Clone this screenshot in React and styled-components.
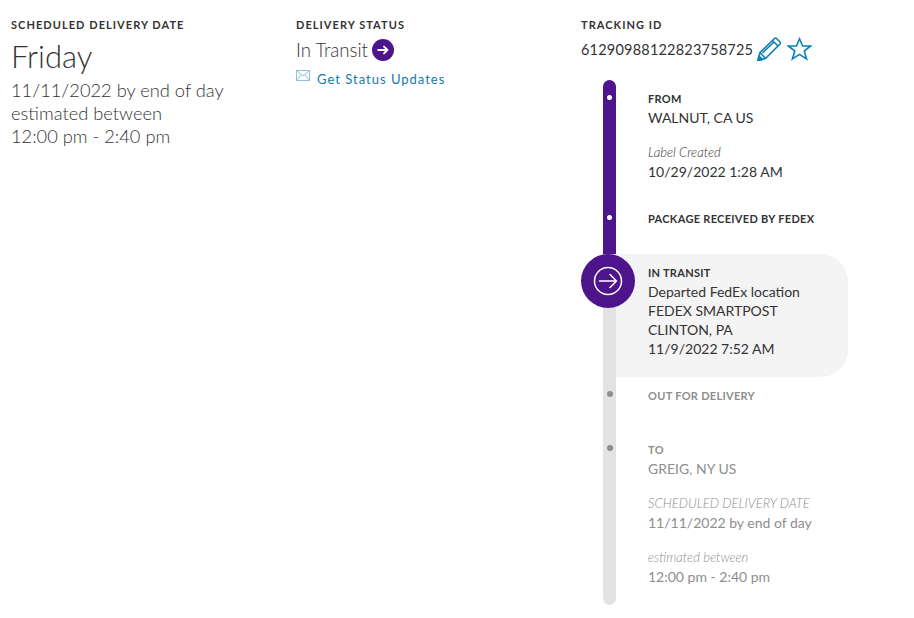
import React from "react";
import styled, { createGlobalStyle } from "styled-components";

const Global = createGlobalStyle`
  html, body { margin: 0; padding: 0; background: #fff; }
  body { font-family: "Lato", "Open Sans", sans-serif; color: #333; }
`;

const Page = styled.div`
  display: grid;
  grid-template-columns: 285px 285px 1fr;
  padding: 18px 0 0 11px;
  width: 914px;
  height: 618px;
  box-sizing: border-box;
  overflow: hidden;
`;
const Column = styled.section`
  display: flex;
  flex-direction: column;
  align-items: flex-start;
`;
const Label = styled.h2`
  margin: 0;
  font-size: 11px;
  line-height: 14px;
  font-weight: 700;
  letter-spacing: 1.05px;
  color: #333;
`;
const Day = styled.div`
  font-size: 31px;
  line-height: 36px;
  font-weight: 300;
  margin-top: 6px;
  margin-bottom: 5px;
`;
const DateLine = styled.div`
  font-size: 18.3px;
  line-height: 23px;
  font-weight: 300;
  color: #333;
`;
const StatusRow = styled.div`
  display: flex;
  align-items: center;
  gap: 4px;
  height: 24px;
  margin-top: 6px;
  font-size: 18.6px;
  font-weight: 300;
`;
const StatusBadge = styled.span`
  width: 22px;
  height: 22px;
  border-radius: 50%;
  background: #4d148c;
  display: inline-flex;
  align-items: center;
  justify-content: center;
`;
const UpdateLink = styled.a`
  display: flex;
  align-items: flex-start;
  gap: 7px;
  margin-top: 8px;
  font-size: 13px;
  line-height: 18px;
  letter-spacing: 1px;
  color: #1479ab;
`;
const TrackRow = styled.div`
  display: flex;
  align-items: center;
  gap: 4px;
  height: 24px;
  margin-top: 5px;
  font-size: 14.5px;
  letter-spacing: 0.2px;
`;
const IconGroup = styled.span`
  display: inline-flex;
  align-items: center;
  gap: 6px;
`;
const Timeline = styled.div`
  display: flex;
  flex-direction: column;
  margin-top: 19px;
  width: 267px;
`;
const Step = styled.div`
  display: flex;
  align-items: stretch;
  position: relative;
`;
const Rail = styled.div`
  width: 35px;
  flex: none;
  display: flex;
  justify-content: flex-end;
`;
const Bar = styled.div`
  width: 13px;
  display: flex;
  justify-content: center;
  padding-top: ${(p) => p.$dotTop}px;
  box-sizing: border-box;
  background: ${(p) => (p.$done ? "#4d148c" : "#e3e3e3")};
  border-radius: ${(p) => (p.$first ? "7px 7px 0 0" : p.$last ? "0 0 7px 7px" : "0")};
`;
const Dot = styled.span`
  width: ${(p) => (p.$done ? 5 : 6)}px;
  height: ${(p) => (p.$done ? 5 : 6)}px;
  border-radius: 50%;
  background: ${(p) => (p.$done ? "#fff" : "#8e8e8e")};
`;
const Node = styled.div`
  position: absolute;
  left: 0;
  top: 0;
  width: 54px;
  height: 54px;
  border-radius: 50%;
  background: #4d148c;
  display: flex;
  align-items: center;
  justify-content: center;
`;
const Content = styled.div`
  flex: 1;
  padding: 9px 0 ${(p) => p.$bottom}px 32px;
  font-size: 14px;
  line-height: 19px;
  color: ${(p) => (p.$muted ? "#8e8e8e" : "#333")};
  background: ${(p) => (p.$active ? "#f4f4f4" : "transparent")};
  border-radius: ${(p) => (p.$active ? "0 27px 27px 0" : "0")};
`;
const StepTitle = styled.div`
  font-size: 11px;
  font-weight: 700;
  letter-spacing: 0.3px;
`;
const Note = styled.div`
  font-size: 13px;
  font-style: italic;
  font-weight: 300;
  margin-top: 16px;
`;
const Line = styled.div`
  font-weight: 400;
`;

export default function App() {
  return (
    <Page>
      <Global />
      <Column>
        <Label>SCHEDULED DELIVERY DATE</Label>
        <Day>Friday</Day>
        <DateLine>11/11/2022 by end of day</DateLine>
        <DateLine>estimated between</DateLine>
        <DateLine>12:00 pm - 2:40 pm</DateLine>
      </Column>
      <Column>
        <Label>DELIVERY STATUS</Label>
        <StatusRow>
          In Transit
          <StatusBadge>
            <svg width="12" height="12" viewBox="0 0 12 12" fill="none" stroke="#fff" strokeWidth="1.9" strokeLinecap="round" strokeLinejoin="round">
              <path d="M1.2 6h9.3M7 2.6 10.5 6 7 9.4" />
            </svg>
          </StatusBadge>
        </StatusRow>
        <UpdateLink>
          <svg width="14" height="11" viewBox="0 0 14 11" fill="none" stroke="#8cc3e0" strokeWidth="1">
            <rect x="0.5" y="0.5" width="13" height="10" />
            <path d="M0.5 0.5 7 6l6.5-5.5M0.5 10.5 5 4.6M13.5 10.5 9 4.6" />
          </svg>
          Get Status Updates
        </UpdateLink>
      </Column>
      <Column>
        <Label>TRACKING ID</Label>
        <TrackRow>
          61290988122823758725
          <IconGroup>
            <svg width="24" height="24" viewBox="0 0 24 24" fill="none" stroke="#0f7fb8" strokeWidth="1.6" strokeLinejoin="round">
              <path d="M1 23.5 3 15.5 17.5 1.5a1.5 1.5 0 0 1 2 0L23 5a1.5 1.5 0 0 1 0 2L8.5 21.5z" />
              <path d="M3 15.5 8.5 21.5M15.5 3.5l5.5 5.5M5.5 16 17.5 4.5" />
              <path d="M1 23.5l1-4.5 3.5 3.5z" fill="#0f7fb8" />
            </svg>
            <svg width="25" height="24" viewBox="0 0 25 24" fill="none" stroke="#0f7fb8" strokeWidth="1.6" strokeLinejoin="miter">
              <path d="M12.5 1.8 15.6 9h8l-6.4 5.1 2.4 7.9-7.1-4.6L5.4 22l2.4-7.9L1.4 9h8z" />
            </svg>
          </IconGroup>
        </TrackRow>
        <Timeline>
          <Step>
            <Rail><Bar $done $first $dotTop={15}><Dot $done /></Bar></Rail>
            <Content $bottom={19}>
              <StepTitle>FROM</StepTitle>
              <Line>WALNUT, CA US</Line>
              <Note>Label Created</Note>
              <Line>10/29/2022 1:28 AM</Line>
            </Content>
          </Step>
          <Step>
            <Rail><Bar $done $dotTop={15}><Dot $done /></Bar></Rail>
            <Content $bottom={26}>
              <StepTitle>PACKAGE RECEIVED BY FEDEX</StepTitle>
            </Content>
          </Step>
          <Step>
            <Rail><Bar /></Rail>
            <Content $active $bottom={19}>
              <StepTitle>IN TRANSIT</StepTitle>
              <Line>Departed FedEx location</Line>
              <Line>FEDEX SMARTPOST</Line>
              <Line>CLINTON, PA</Line>
              <Line>11/9/2022 7:52 AM</Line>
            </Content>
            <Node>
              <svg width="30" height="30" viewBox="0 0 30 30" fill="none" stroke="#fff" strokeWidth="1.5" strokeLinecap="round" strokeLinejoin="round">
                <circle cx="15" cy="15" r="13.5" />
                <path d="M6.5 15h17M17 8.5l6.5 6.5-6.5 6.5" />
              </svg>
            </Node>
          </Step>
          <Step>
            <Rail><Bar $dotTop={14}><Dot /></Bar></Rail>
            <Content $muted $bottom={26}>
              <StepTitle>OUT FOR DELIVERY</StepTitle>
            </Content>
          </Step>
          <Step>
            <Rail><Bar $last $dotTop={14}><Dot /></Bar></Rail>
            <Content $muted $bottom={19}>
              <StepTitle>TO</StepTitle>
              <Line>GREIG, NY US</Line>
              <Note>SCHEDULED DELIVERY DATE</Note>
              <Line>11/11/2022 by end of day</Line>
              <Note>estimated between</Note>
              <Line>12:00 pm - 2:40 pm</Line>
            </Content>
          </Step>
        </Timeline>
      </Column>
    </Page>
  );
}
